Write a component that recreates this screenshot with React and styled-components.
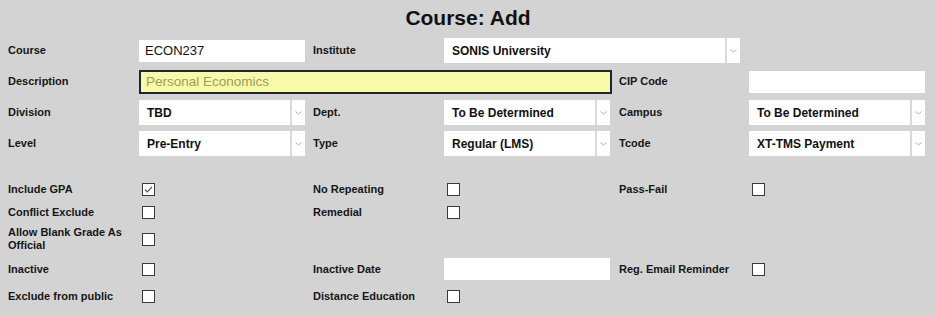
import React from "react";
import styled, { createGlobalStyle } from "styled-components";

const Global = createGlobalStyle`
  html, body { margin: 0; padding: 0; background: #d3d3d3; }
  body { font-family: "Liberation Sans", Arial, sans-serif; color: #151515; }
`;

const Page = styled.div`
  width: 936px;
  height: 316px;
  background: #d3d3d3;
  overflow: hidden;
`;

const Title = styled.h1`
  margin: 0;
  padding-top: 6px;
  height: 32px;
  font-size: 21px;
  line-height: 24px;
  font-weight: 700;
  text-align: center;
  color: #111;
`;

const Grid = styled.div`
  display: grid;
  grid-template-columns: 131px 174px 131px 175px 130px 176px;
  padding-left: 8px;
  align-items: center;
`;

const TopGrid = styled(Grid)`
  grid-auto-rows: 25px;
  row-gap: 6px;
`;

const CheckGrid = styled(Grid)`
  margin-top: 22px;
  grid-template-rows: 22px 24px 30px 30px 24px;
`;

const Label = styled.div`
  font-size: 11px;
  line-height: 13px;
  font-weight: 700;
  color: #161616;
  padding-right: 8px;
  grid-column: ${(p) => p.$col || "auto"};
`;

const Cell = styled.div`
  display: flex;
  align-items: center;
  grid-column: ${(p) => p.$col || "auto"};
  grid-row: ${(p) => p.$row || "auto"};
`;

const TextInput = styled.div`
  box-sizing: border-box;
  width: ${(p) => p.$w}px;
  height: ${(p) => p.$h || 22}px;
  background: ${(p) => (p.$yellow ? "#f7faa8" : "#fff")};
  border: ${(p) => (p.$yellow ? "2px solid #22252f" : "none")};
  padding-left: ${(p) => (p.$yellow ? 5 : 6)}px;
  display: flex;
  align-items: center;
  font-size: ${(p) => (p.$yellow ? 13.5 : 13)}px;
  color: ${(p) => (p.$yellow ? "#9d9d5c" : "#111")};
`;

const SelectBox = styled.div`
  box-sizing: border-box;
  width: ${(p) => p.$w}px;
  height: 25px;
  background: #fff;
  display: flex;
`;

const SelectValue = styled.div`
  flex: 1;
  display: flex;
  align-items: center;
  padding-left: 8px;
  font-size: 12px;
  font-weight: 700;
  color: #111;
  white-space: nowrap;
`;

const SelectArrow = styled.div`
  width: 13px;
  border-left: 2px solid #dadada;
  display: flex;
  align-items: center;
  justify-content: center;
`;

const Box = styled.span`
  box-sizing: border-box;
  width: 13px;
  height: 13px;
  margin-left: 3px;
  background: #fff;
  border: 1px solid #3a3a3a;
  display: flex;
  align-items: center;
  justify-content: center;
`;

const Chevron = () => (
  <svg width="7" height="4" viewBox="0 0 7 4">
    <path d="M0.5 0.5 L3.5 3 L6.5 0.5" fill="none" stroke="#b0b0b0" strokeWidth="1" />
  </svg>
);

const Select = ({ w, value }) => (
  <SelectBox $w={w}>
    <SelectValue>{value}</SelectValue>
    <SelectArrow>
      <Chevron />
    </SelectArrow>
  </SelectBox>
);

const Check = ({ checked }) => (
  <Box>
    {checked && (
      <svg width="11" height="11" viewBox="0 0 11 11">
        <path d="M2 5.5 L4.3 7.8 L9 3" fill="none" stroke="#555" strokeWidth="1.2" />
      </svg>
    )}
  </Box>
);

export default function App() {
  return (
    <Page>
      <Global />
      <Title>Course: Add</Title>
      <TopGrid>
        <Label>Course</Label>
        <Cell>
          <TextInput $w={166}>ECON237</TextInput>
        </Cell>
        <Label>Institute</Label>
        <Cell $col="4 / span 2">
          <Select w={296} value="SONIS University" />
        </Cell>
        <Cell />

        <Label>Description</Label>
        <Cell $col="2 / span 3">
          <TextInput $w={473} $h={24} $yellow>Personal Economics</TextInput>
        </Cell>
        <Label>CIP Code</Label>
        <Cell>
          <TextInput $w={176}></TextInput>
        </Cell>

        <Label>Division</Label>
        <Cell>
          <Select w={166} value="TBD" />
        </Cell>
        <Label>Dept.</Label>
        <Cell>
          <Select w={166} value="To Be Determined" />
        </Cell>
        <Label>Campus</Label>
        <Cell>
          <Select w={176} value="To Be Determined" />
        </Cell>

        <Label>Level</Label>
        <Cell>
          <Select w={166} value="Pre-Entry" />
        </Cell>
        <Label>Type</Label>
        <Cell>
          <Select w={166} value="Regular (LMS)" />
        </Cell>
        <Label>Tcode</Label>
        <Cell>
          <Select w={176} value="XT-TMS Payment" />
        </Cell>
      </TopGrid>

      <CheckGrid>
        <Label>Include GPA</Label>
        <Cell><Check checked /></Cell>
        <Label>No Repeating</Label>
        <Cell><Check /></Cell>
        <Label>Pass-Fail</Label>
        <Cell><Check /></Cell>

        <Label>Conflict Exclude</Label>
        <Cell><Check /></Cell>
        <Label>Remedial</Label>
        <Cell><Check /></Cell>
        <Cell />
        <Cell />

        <Label>Allow Blank Grade As Official</Label>
        <Cell><Check /></Cell>
        <Cell />
        <Cell />
        <Cell />
        <Cell />

        <Label>Inactive</Label>
        <Cell><Check /></Cell>
        <Label>Inactive Date</Label>
        <Cell>
          <TextInput $w={166}></TextInput>
        </Cell>
        <Label>Reg. Email Reminder</Label>
        <Cell><Check /></Cell>

        <Label>Exclude from public</Label>
        <Cell><Check /></Cell>
        <Label>Distance Education</Label>
        <Cell><Check /></Cell>
        <Cell />
        <Cell />
      </CheckGrid>
    </Page>
  );
}
